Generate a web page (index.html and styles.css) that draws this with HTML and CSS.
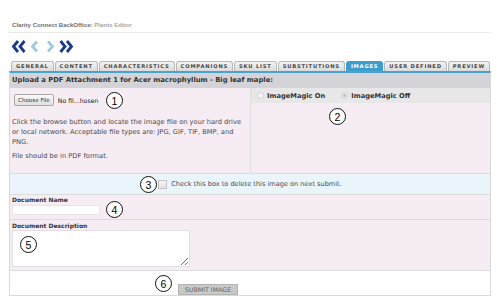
FILE: index.html
```html
<!DOCTYPE html>
<html>
<head>
<meta charset="utf-8">
<title>Plants Editor</title>
<link rel="stylesheet" href="styles.css">
</head>
<body>
<div class="page">
  <div class="title"><span class="t1">Clarity Connect BackOffice:</span> <span class="t2">Plants Editor</span></div>
  <div class="nav">
    <svg width="62" height="13" viewBox="0 0 62 13">
      <g fill="none" stroke-width="2.8" stroke-linecap="butt" stroke-linejoin="miter">
        <path d="M6 1 L1.5 6.5 L6 12 M12.5 1 L8 6.5 L12.5 12" stroke="#1c3a8c"/>
        <path d="M25 1.5 L20.5 6.5 L25 11.5" stroke="#9fcbe0"/>
        <path d="M36 1.5 L40.5 6.5 L36 11.5" stroke="#9fcbe0"/>
        <path d="M48.5 1 L53 6.5 L48.5 12 M55 1 L59.5 6.5 L55 12" stroke="#1c3a8c"/>
      </g>
    </svg>
  </div>
  <div class="tabs">
    <span class="tab">GENERAL</span>
    <span class="tab">CONTENT</span>
    <span class="tab">CHARACTERISTICS</span>
    <span class="tab">COMPANIONS</span>
    <span class="tab">SKU LIST</span>
    <span class="tab">SUBSTITUTIONS</span>
    <span class="tab active">IMAGES</span>
    <span class="tab">USER DEFINED</span>
    <span class="tab">PREVIEW</span>
  </div>
  <div class="panel">
    <div class="bar">Upload a PDF Attachment 1 for Acer macrophyllum - Big leaf maple:</div>
    <div class="row-main">
      <div class="cell-left">
        <div class="file"><span class="btn-file">Choose File</span><span class="file-name">No fil...hosen</span></div>
        <p class="help">Click the browse button and locate the image file on your hard drive or local network. Acceptable file types are: JPG, GIF, TIF, BMP, and PNG.</p>
        <p class="help second">File should be in PDF format.</p>
      </div>
      <div class="cell-right">
        <div class="radios">
          <span class="radio"></span><span class="radio-label">ImageMagic On</span>
          <span class="radio checked"></span><span class="radio-label">ImageMagic Off</span>
        </div>
      </div>
    </div>
    <div class="row-check"><span class="checkbox"></span><span>Check this box to delete this image on next submit.</span></div>
    <div class="row-name">
      <div class="label">Document Name</div>
      <div class="text-input"></div>
    </div>
    <div class="row-desc">
      <div class="label">Document Description</div>
      <textarea class="text-area"></textarea>
    </div>
    <div class="row-submit"><span class="submit">SUBMIT IMAGE</span></div>
  </div>

  <span class="mark m1">1</span>
  <span class="mark m2">2</span>
  <span class="mark m3">3</span>
  <span class="mark m4">4</span>
  <span class="mark m5">5</span>
  <span class="mark m6">6</span>
</div>
</body>
</html>
```

FILE: styles.css
```css
* { box-sizing: border-box; }
html, body { margin: 0; background: #fff; }
body { font-family: "DejaVu Sans", Verdana, sans-serif; color: #333; }

.page { position: relative; width: 500px; height: 304px; padding: 0 9px; overflow: hidden; }

.title {
  height: 33px;
  padding: 20px 0 0 3px;
  line-height: 10px;
  font-family: "Liberation Sans", Arial, sans-serif;
  font-size: 6.1px;
  font-weight: bold;
  border-bottom: 1px solid #e8e8e8;
}
.t1 { color: #707070; }
.t2 { color: #a6a6a6; }

.nav { height: 28px; padding: 7px 0 0 3px; }
.nav svg { display: block; }

.tabs { display: flex; gap: 1px; height: 10px; padding-left: 2px; align-items: flex-end; }
.tab {
  height: 10px;
  padding: 0 4px;
  border: 1px solid #b8b8b8;
  border-bottom: 0;
  border-radius: 3px 3px 0 0;
  background: linear-gradient(#f4f4f4, #dadada);
  font-weight: bold;
  font-size: 5.2px;
  line-height: 9px;
  letter-spacing: 0.8px;
  color: #474747;
  white-space: nowrap;
}
.tab.active { background: #3d9dcf; border-color: #3d9dcf; color: #fff; }

.panel {
  border: 1px solid #d9d9d9;
  border-top: 2px solid #4aa3cf;
}
.bar {
  height: 15px;
  padding-left: 2px;
  background: #d4d4d8;
  font-weight: bold;
  font-size: 6.8px;
  line-height: 15px;
  color: #333;
  white-space: nowrap;
}

.row-main {
  display: grid;
  grid-template-columns: 240px 1fr;
  height: 86px;
  border-bottom: 1px solid #ddd;
  background: #f6ecf3;
}
.cell-left { padding: 6px 7px 0 2px; }
.file { display: flex; align-items: center; gap: 4px; height: 12px; margin-left: 2px; }
.btn-file {
  height: 12px;
  padding: 0 3px;
  border: 1px solid #a9a9a9;
  border-radius: 2px;
  background: linear-gradient(#f9f9f9, #e0e0e0);
  font-size: 5.6px;
  line-height: 10px;
  color: #333;
}
.file-name { font-size: 6.2px; color: #222; }
.help { margin: 11px 0 0; font-size: 6.7px; line-height: 10px; color: #4a4a4a; }
.help.second { margin-top: 4px; }

.cell-right { border-left: 1px solid #ddd; }
.radios {
  display: flex;
  align-items: center;
  height: 15px;
  padding-left: 6px;
  background: #e7e7e7;
}
.radio {
  width: 7px; height: 7px;
  border: 1px solid #d0d0d0;
  border-radius: 50%;
  background: #f4f4f4;
  margin-right: 3px;
}
.radio.checked { background: radial-gradient(circle, #bbb 0 1.3px, #f4f4f4 1.6px); }
.radio-label { font-weight: bold; font-size: 6.7px; color: #333; margin-right: 16px; }

.row-check {
  display: flex;
  align-items: center;
  justify-content: center;
  height: 21px;
  background: #e9f5fb;
  border-bottom: 1px solid #dcdcdc;
  font-size: 6.6px;
  color: #4a4a4a;
}
.checkbox {
  width: 9px; height: 9px;
  border: 1px solid #c3c3c3;
  background: linear-gradient(#f6f6f6, #e2e2e2);
  margin-right: 4px;
}

.label { font-weight: bold; font-size: 6px; line-height: 8px; color: #333; }

.row-name {
  height: 25px;
  padding: 1px 0 0 2px;
  background: #f6ecf3;
  border-bottom: 1px solid #ddd;
}
.text-input {
  width: 88px; height: 10px;
  margin-top: 1px;
  background: #fff;
  border: 1px solid #ece4ea;
}

.row-desc {
  height: 51px;
  padding: 2px 0 0 2px;
  background: #f6ecf3;
  border-bottom: 1px solid #ddd;
}
.text-area {
  display: block;
  width: 178px; height: 37px;
  margin: 0;
  background: #fff;
  border: 1px solid #e6dde3;
  padding: 0;
}

.row-submit { height: 24px; padding: 6px 0 0 168px; background: #fff; }
.submit {
  display: inline-block;
  width: 60px; height: 11px;
  background: #c9c9c9;
  border: 1px solid #b3b3b3;
  font-size: 6.3px;
  line-height: 9px;
  text-align: center;
  color: #666;
}

.mark {
  position: absolute;
  width: 17px; height: 17px;
  border: 1.5px solid #111;
  border-radius: 50%;
  background: #fff;
  display: flex;
  align-items: center;
  justify-content: center;
  font-family: "Liberation Sans", Arial, sans-serif;
  font-size: 10.5px;
  color: #000;
}
.m1 { left: 106px; top: 92px; }
.m2 { left: 329px; top: 108px; }
.m3 { left: 140px; top: 176px; }
.m4 { left: 106px; top: 201px; }
.m5 { left: 20px; top: 236px; }
.m6 { left: 155px; top: 275px; }
```
